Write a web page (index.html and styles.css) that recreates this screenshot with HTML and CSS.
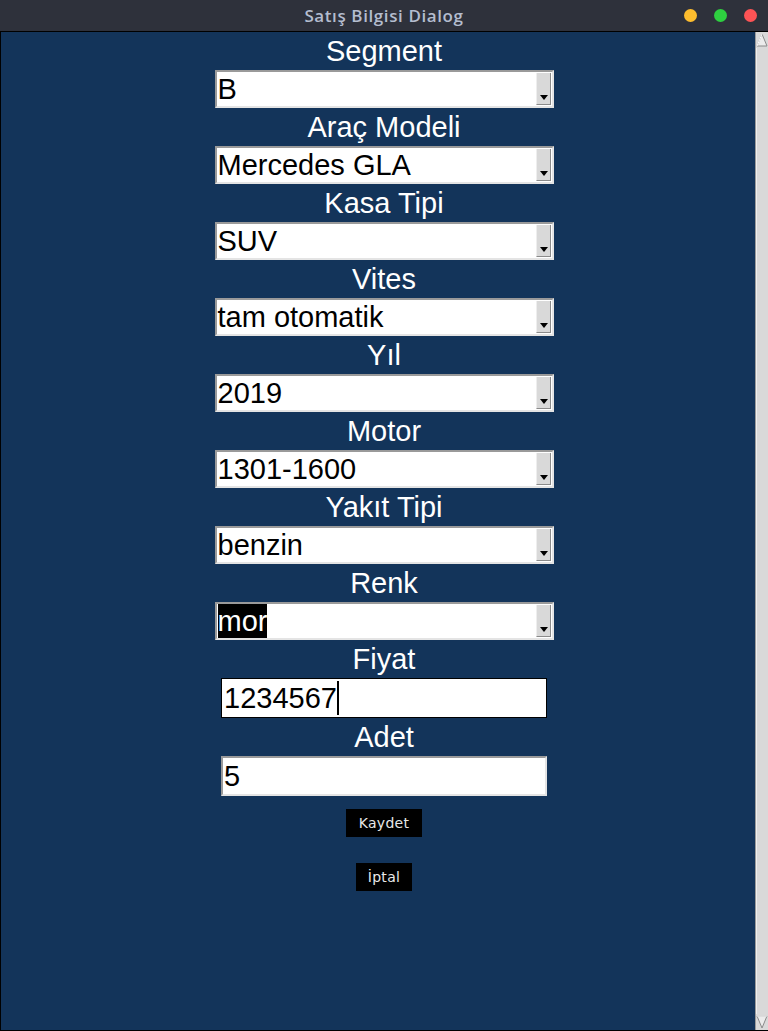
FILE: index.html
```html
<!DOCTYPE html>
<html lang="tr">
<head>
<meta charset="utf-8">
<title>Satış Bilgisi Dialog</title>
<link rel="stylesheet" href="styles.css">
</head>
<body>
<div class="window">
  <header class="titlebar">
    <div class="title">Satış Bilgisi Dialog</div>
    <div class="lights">
      <span class="light yellow"></span>
      <span class="light green"></span>
      <span class="light red"></span>
    </div>
  </header>
  <div class="body">
    <main class="content">
      <div class="label">Segment</div>
      <div class="combo"><span class="val">B</span><span class="arrow"><i></i></span></div>
      <div class="label">Araç Modeli</div>
      <div class="combo"><span class="val">Mercedes GLA</span><span class="arrow"><i></i></span></div>
      <div class="label">Kasa Tipi</div>
      <div class="combo"><span class="val">SUV</span><span class="arrow"><i></i></span></div>
      <div class="label">Vites</div>
      <div class="combo"><span class="val">tam otomatik</span><span class="arrow"><i></i></span></div>
      <div class="label">Yıl</div>
      <div class="combo"><span class="val">2019</span><span class="arrow"><i></i></span></div>
      <div class="label">Motor</div>
      <div class="combo"><span class="val">1301-1600</span><span class="arrow"><i></i></span></div>
      <div class="label">Yakıt Tipi</div>
      <div class="combo"><span class="val">benzin</span><span class="arrow"><i></i></span></div>
      <div class="label">Renk</div>
      <div class="combo"><span class="val selected">mor</span><span class="arrow"><i></i></span></div>
      <div class="label">Fiyat</div>
      <div class="entry focused"><span class="val">1234567</span><span class="caret"></span></div>
      <div class="label">Adet</div>
      <div class="entry"><span class="val">5</span></div>
      <button class="btn save">Kaydet</button>
      <button class="btn cancel">İptal</button>
    </main>
    <aside class="scrollbar">
      <svg class="sarrow" width="12" height="14" viewBox="0 0 12 14">
        <polygon points="6,1 11,13 1,13" fill="#ececec" stroke="#8a8a8a" stroke-width="1"/>
        <polyline points="1,13 6,1" fill="none" stroke="#ffffff" stroke-width="1"/>
      </svg>
      <div class="track"></div>
      <svg class="sarrow" width="12" height="14" viewBox="0 0 12 14">
        <polygon points="1,1 11,1 6,13" fill="#ececec" stroke="#8a8a8a" stroke-width="1"/>
        <polyline points="1,1 11,1" fill="none" stroke="#ffffff" stroke-width="1"/>
      </svg>
    </aside>
  </div>
</div>
</body>
</html>
```
FILE: styles.css
```css
* { box-sizing: border-box; }
html, body {
  margin: 0;
  padding: 0;
  width: 768px;
  height: 1031px;
  overflow: hidden;
  background: #2e313b;
}
.window {
  width: 768px;
  height: 1031px;
  display: flex;
  flex-direction: column;
}
.titlebar {
  height: 31px;
  flex: 0 0 31px;
  background: #2e313b;
  position: relative;
  display: flex;
  align-items: center;
  justify-content: center;
}
.title {
  font-family: "Open Sans", "DejaVu Sans", sans-serif;
  font-weight: 600;
  font-size: 17px;
  color: #b4bdcf;
  letter-spacing: 0.6px;
  padding-left: 0;
}
.lights {
  position: absolute;
  right: 11px;
  top: 9px;
  display: flex;
  gap: 17px;
}
.light {
  width: 13px;
  height: 13px;
  border-radius: 50%;
  display: block;
}
.yellow { background: #fdbd2e; }
.green { background: #2ecf40; }
.red { background: #fd5355; }

.body {
  flex: 1;
  display: flex;
  background: #13345a;
  border-top: 1px solid #000;
  border-left: 1px solid #000;
  border-bottom: 1px solid #000;
}
.content {
  flex: 1;
  display: flex;
  flex-direction: column;
  align-items: center;
  padding-left: 12px;
  background: #13345a;
}
.label {
  height: 38px;
  line-height: 38px;
  font-family: "Liberation Sans", Arial, sans-serif;
  font-size: 29px;
  color: #ffffff;
}
.combo {
  width: 339px;
  height: 38px;
  background: #ffffff;
  border: 2px solid;
  border-color: #9a9a9a #e4e4e4 #e4e4e4 #9a9a9a;
  display: flex;
  align-items: center;
  position: relative;
  padding-left: 1px;
}
.val {
  font-family: "Liberation Sans", Arial, sans-serif;
  font-size: 29px;
  color: #000;
  line-height: 32px;
}
.val.selected {
  background: #000;
  color: #fff;
  line-height: 34px;
}
.arrow {
  position: absolute;
  right: 1px;
  top: 1px;
  bottom: 1px;
  width: 15px;
  background: #d9d9d9;
  border-left: 1px solid #eeeeee;
  border-right: 1px solid #8a8a8a;
  border-bottom: 1px solid #8a8a8a;
}
.arrow i {
  position: absolute;
  left: 3px;
  bottom: 4px;
  width: 0;
  height: 0;
  border-left: 4px solid transparent;
  border-right: 4px solid transparent;
  border-top: 5px solid #000;
}
.entry {
  width: 326px;
  height: 40px;
  background: #fff;
  border: 2px solid;
  border-color: #9a9a9a #e4e4e4 #e4e4e4 #9a9a9a;
  display: flex;
  align-items: center;
  padding-left: 1px;
}
.entry.focused {
  border: 1px solid #000;
  padding-left: 2px;
}
.caret {
  display: block;
  width: 2px;
  height: 34px;
  background: #000;
  margin-left: 0;
}
.btn {
  font-family: "DejaVu Sans", sans-serif;
  font-size: 14px;
  color: #e8e8e8;
  background: #000;
  border: none;
  height: 28px;
  padding: 0;
  letter-spacing: 0.3px;
}
.save {
  width: 76px;
  margin-top: 13px;
}
.cancel {
  width: 56px;
  margin-top: 26px;
}
.scrollbar {
  width: 13px;
  flex: 0 0 13px;
  background: #d9d9d9;
  border-left: 1px solid #9a9a9a;
  display: flex;
  flex-direction: column;
  align-items: center;
}
.sarrow {
  display: block;
  flex: 0 0 14px;
  margin: 1px 0;
}
.track {
  flex: 1;
  width: 100%;
  border-left: 1px solid #efefef;
}
```
